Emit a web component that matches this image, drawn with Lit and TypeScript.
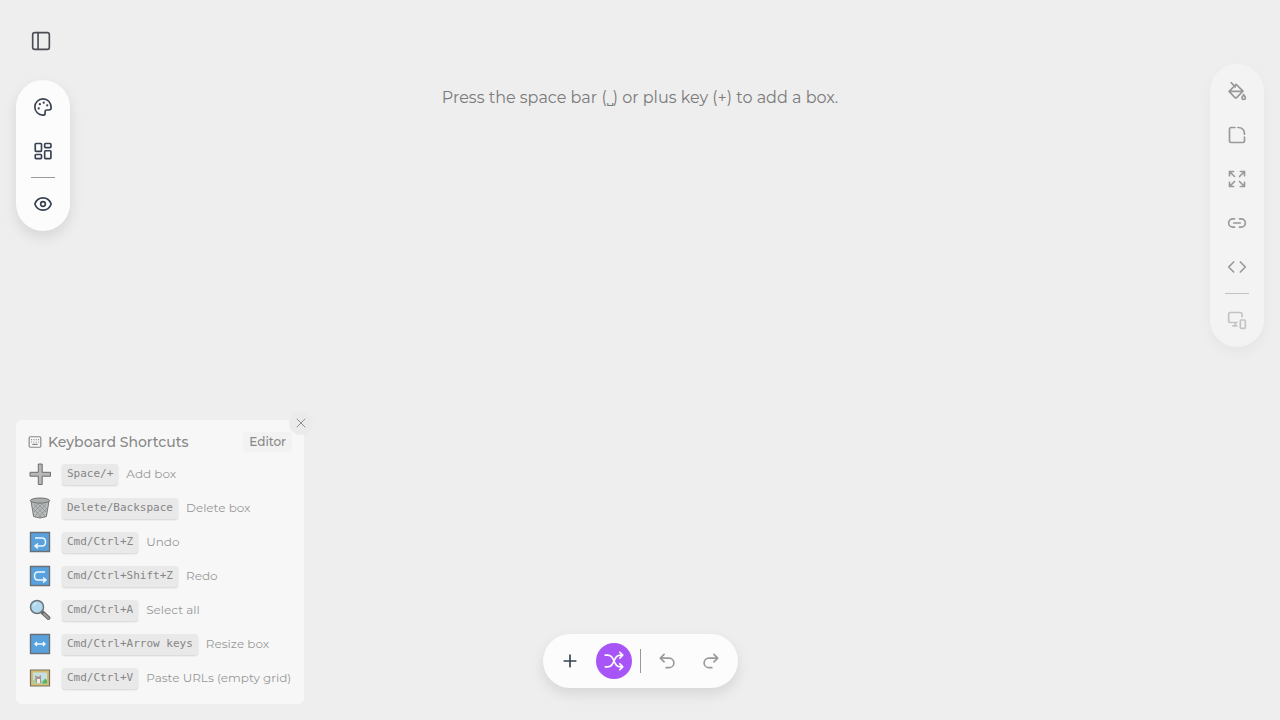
import { LitElement, html, css, svg } from "lit";
import { customElement, property, state } from "lit/decorators.js";

const icons: Record<string, unknown> = {
  sidebar: svg`<rect x="2" y="2" width="20" height="20" rx="2.5"/><path d="M8.500 2v20"/>`,
  palette: svg`<path d="M12 2.200a9.800 9.800 0 1 0 0 19.600c1.500 0 2.500-1 2.500-2.400v-1.800c0-1.200.8-2 2-2h2.700c1.500 0 2.600-1.100 2.600-2.600C21.800 6.500 17.500 2.200 12 2.200z"/><path d="M6.800 13.700h.1M8.200 8.600h.1M12.800 6.800h.1M17 10h.1" stroke-width="2.600"/>`,
  layout: svg`<rect x="2.700" y="3" width="7.500" height="9.500" rx="1"/><rect x="14" y="3" width="7.500" height="5" rx="1"/><rect x="2.700" y="16.200" width="7.500" height="5" rx="1"/><rect x="14" y="11.700" width="7.500" height="9.500" rx="1"/>`,
  eye: svg`<path d="M2.200 12C3.800 7.300 7.600 4.600 12 4.600s8.200 2.700 9.800 7.400c-1.600 4.700-5.400 7.400-9.800 7.400S3.800 16.700 2.200 12z"/><circle cx="12" cy="12" r="2.800"/>`,
  fill: svg`<path d="M5 2l5 5M2.500 12.500l8.500-8.500 8.200 8.200-7.700 7.700a1.500 1.500 0 0 1-2 0zM3.500 12.500H18"/><path d="M20 16.500c1 1.500 2 2.600 2 3.700a2 2 0 0 1-4 0c0-1.100 1-2.200 2-3.700z"/>`,
  corner: svg`<path d="M9.500 3H5a2 2 0 0 0-2 2v14a2 2 0 0 0 2 2h14a2 2 0 0 0 2-2v-4.500M13 3c5 0 8 3 8 8"/>`,
  expand: svg`<path d="M3 8V3h5M3 3l6 6M16 3h5v5M21 3l-6 6M3 16v5h5M3 21l6-6M21 16v5h-5M21 21l-6-6"/>`,
  link: svg`<path d="M9 7H7a5 5 0 0 0 0 10h2M15 7h2a5 5 0 0 1 0 10h-2M8 12h8"/>`,
  code: svg`<path d="M8 6l-6 6 6 6M16 6l6 6-6 6"/>`,
  devices: svg`<path d="M18 8V5a2 2 0 0 0-2-2H4a2 2 0 0 0-2 2v8a2 2 0 0 0 2 2h8M10 15v4M7 19h5"/><rect x="16" y="12" width="6" height="10" rx="1"/>`,
  plus: svg`<path d="M12 5v14M5 12h14"/>`,
  shuffle: svg`<path d="M1.500 5H4c4.500 0 6 2.500 8 7s3.500 7 8 7h2M1.500 19H4c4.500 0 6-2.500 8-7s3.500-7 8-7h2M19 1.500L22.500 5 19 8.500M19 15.500l3.500 3.500-3.500 3.500"/>`,
  undo: svg`<path d="M8.500 13L4 8.500 8.500 4M4 8.500h10.500a5.500 5.500 0 0 1 0 11.500H11"/>`,
  redo: svg`<path d="M15.500 13L20 8.500 15.500 4M20 8.500H9.500a5.500 5.500 0 0 0 0 11.500H13"/>`,
  keyboard: svg`<rect x="2" y="3" width="20" height="18" rx="2"/><path d="M6 8h.1M10 8h.1M14 8h.1M18 8h.1M6 12h.1M10 12h.1M14 12h.1M18 12h.1M8 16h8"/>`,
  close: svg`<path d="M4 4l16 16M20 4L4 20"/>`,
};

@customElement("tool-icon")
class ToolIcon extends LitElement {
  @property() name = "";
  static styles = css`
    :host { display: block; width: 20px; height: 20px; }
    svg { display: block; width: 100%; height: 100%; fill: none; stroke: currentColor; stroke-width: 2; stroke-linecap: round; stroke-linejoin: round; }
  `;
  render() {
    return html`<svg viewBox="0 0 24 24" aria-hidden="true">${icons[this.name]}</svg>`;
  }
}

const pictures: Record<string, unknown> = {
  add: svg`<path d="M9.300 1h3.900v8.300h8.300v3.900h-8.300v8.300H9.300v-8.300H1V9.300h8.300z" fill="#b8b8b8" stroke="#6c6c6c"/>`,
  trash: svg`<path d="M2 4l2.600 15.500q6.400 3 12.800 0L20 4z" fill="#b8bcbc" stroke="#777"/><path d="M5 7l11 12M9 7l8 8M13 7l4 4M4 11l8 9M17 7L6 19M13 7l-8 8M9 7l-4 4M18 11l-8 9" stroke="#858989" stroke-width=".7"/><ellipse cx="11" cy="3.600" rx="9.600" ry="2.600" fill="#a9adad" stroke="#727272"/>`,
  undo: svg`<path d="M1.500 1.500h19v19h-19z" fill="#58a1dc" stroke="#687078" stroke-width="1.400"/><path d="M6 7h7q3.500 0 3.500 4t-3.500 4H7M9 12.500L6 15l3 2.500" fill="none" stroke="#eef8ff" stroke-width="1.500"/>`,
  redo: svg`<path d="M1.500 1.500h19v19h-19z" fill="#58a1dc" stroke="#687078" stroke-width="1.400"/><path d="M16 7H9q-3.500 0-3.500 4T9 15h7M14 12.500l3 2.500-3 2.500" fill="none" stroke="#eef8ff" stroke-width="1.500"/>`,
  search: svg`<path d="M13 13l6.500 6" stroke="#666" stroke-width="4" stroke-linecap="round"/><path d="M15 15l4.300 4" stroke="#999" stroke-width="2" stroke-linecap="round"/><circle cx="8" cy="8" r="6.500" fill="#b1d8ed" stroke="#6b747a" stroke-width="1.500"/><path d="M4.500 7q.5-2.500 3-3" fill="none" stroke="#e5f5ff"/>`,
  resize: svg`<path d="M1.500 1.500h19v19h-19z" fill="#58a1dc" stroke="#687078" stroke-width="1.400"/><path d="M6 11h10M8 9l-2 2 2 2M14 9l2 2-2 2" fill="none" stroke="#eef8ff" stroke-width="1.400"/>`,
  image: svg`<path d="M1.500 3h19v16h-19z" fill="#d7bd70" stroke="#77705e" stroke-width="1.200"/><path d="M4 5.500h14v11H4z" fill="#c5e0e5"/><path d="M4 13q3-2 5 0t9-1v4.500H4z" fill="#a5cfa8"/><path d="M13 16.500l3-5 2 2v3z" fill="#51b56a"/><path d="M6 8l2 1.500h2L12 8v8H7z" fill="#a6958b"/><path d="M8 12h3v4H8z" fill="#f1eeee"/>`,
};

const shortcuts = [
  { picture: "add", keys: "Space/+", label: "Add box" },
  { picture: "trash", keys: "Delete/Backspace", label: "Delete box" },
  { picture: "undo", keys: "Cmd/Ctrl+Z", label: "Undo" },
  { picture: "redo", keys: "Cmd/Ctrl+Shift+Z", label: "Redo" },
  { picture: "search", keys: "Cmd/Ctrl+A", label: "Select all" },
  { picture: "resize", keys: "Cmd/Ctrl+Arrow keys", label: "Resize box" },
  { picture: "image", keys: "Cmd/Ctrl+V", label: "Paste URLs (empty grid)" },
];

@customElement("app-root")
class AppRoot extends LitElement {
  @state() private showShortcuts = true;

  static styles = css`
    :host {
      display: grid;
      grid-template-columns: auto 1fr auto;
      grid-template-rows: 1fr auto;
      min-height: 100vh;
      box-sizing: border-box;
      padding: 16px;
      background: #eee;
      color: #374151;
      font-family: Montserrat, Inter, sans-serif;
    }
    * { box-sizing: border-box; }
    button { display: grid; place-items: center; width: 36px; height: 36px; padding: 0; border: 0; border-radius: 50%; background: none; color: inherit; font: inherit; cursor: pointer; }
    .left { display: flex; flex-direction: column; align-items: flex-start; gap: 21px; }
    .sidebar { width: 50px; height: 43px; padding-top: 7px; color: #4b4d55; }
    .bar { display: flex; align-items: center; gap: 8px; padding: 9px; border-radius: 27px; background: #fcfcfc; box-shadow: 0 6px 14px rgb(0 0 0 / 10%); }
    .column { flex-direction: column; }
    .rule { width: 24px; height: 1px; background: #999; }
    .rule.upright { width: 1px; height: 24px; }
    .right { align-self: start; margin-top: 48px; background: #f3f3f3; color: #999; box-shadow: 0 6px 14px rgb(0 0 0 / 4%); }
    .right .rule { background: #c2c2c2; }
    .faint { color: #c3c3c3; }
    .hint { margin: 70px 0 0; text-align: center; font-size: 16px; line-height: 24px; color: #7b7b7b; }
    .bottom { grid-column: 1 / -1; display: grid; grid-template-columns: 1fr auto 1fr; align-items: end; }
    .shortcuts { position: relative; justify-self: start; width: 288px; padding: 12px 12px 14px; border-radius: 6px; background: #f7f7f7; color: #989898; }
    .head { display: flex; align-items: center; gap: 6px; height: 20px; color: #888; }
    .head tool-icon { width: 14px; height: 14px; }
    .title { margin: 0; flex: 1; font-size: 14px; font-weight: 500; line-height: 20px; }
    .tag { padding: 0 6px; border-radius: 4px; background: #f2f2f2; font-size: 12px; font-weight: 500; line-height: 20px; }
    .list { display: grid; gap: 10px; margin: 10px 0 0; padding: 0; list-style: none; }
    .item { display: flex; align-items: center; gap: 8px; height: 24px; font-size: 12px; line-height: 16px; white-space: nowrap; }
    .picture { width: 24px; height: 24px; flex: none; margin-right: 2px; }
    kbd { padding: 0 5px 1px; border-radius: 3px; background: #e9e9e9; box-shadow: 0 1px 2px rgb(0 0 0 / 14%); color: #858585; font: 11px/20px "DejaVu Sans Mono", monospace; }
    .close { position: absolute; top: -9px; right: -9px; width: 24px; height: 24px; background: #ebebeb; color: #8c8c8c; }
    .close tool-icon { width: 12px; height: 12px; }
    .tools { grid-column: 2; margin-bottom: 16px; }
    .random { background: #a855f7; color: #fff; }
    .idle { color: #999; }
  `;

  private button(name: string, label: string, look = "") {
    return html`<button class=${look} aria-label=${label}><tool-icon name=${name}></tool-icon></button>`;
  }

  render() {
    return html`
      <div class="left">
        ${this.button("sidebar", "Toggle sidebar", "sidebar")}
        <nav class="bar column" aria-label="Page">
          ${this.button("palette", "Theme")}
          ${this.button("layout", "Layout")}
          <span class="rule"></span>
          ${this.button("eye", "Preview")}
        </nav>
      </div>
      <p class="hint">Press the space bar (⎵) or plus key (+) to add a box.</p>
      <nav class="bar column right" aria-label="Box">
        ${this.button("fill", "Background")}
        ${this.button("corner", "Corner radius")}
        ${this.button("expand", "Spacing")}
        ${this.button("link", "Link")}
        ${this.button("code", "Code")}
        <span class="rule"></span>
        ${this.button("devices", "Devices", "faint")}
      </nav>
      <div class="bottom">
        ${this.showShortcuts ? html`
          <section class="shortcuts">
            <button class="close" aria-label="Close" @click=${() => (this.showShortcuts = false)}><tool-icon name="close"></tool-icon></button>
            <div class="head">
              <tool-icon name="keyboard"></tool-icon>
              <h2 class="title">Keyboard Shortcuts</h2>
              <span class="tag">Editor</span>
            </div>
            <ul class="list">
              ${shortcuts.map((s) => html`<li class="item">
                <svg class="picture" viewBox="-1 -1 24 24" aria-hidden="true">${pictures[s.picture]}</svg>
                <kbd>${s.keys}</kbd><span>${s.label}</span>
              </li>`)}
            </ul>
          </section>` : ""}
        <div class="bar tools" role="toolbar" aria-label="Edit">
          ${this.button("plus", "Add box")}
          ${this.button("shuffle", "Shuffle", "random")}
          <span class="rule upright"></span>
          ${this.button("undo", "Undo", "idle")}
          ${this.button("redo", "Redo", "idle")}
        </div>
      </div>
    `;
  }
}
